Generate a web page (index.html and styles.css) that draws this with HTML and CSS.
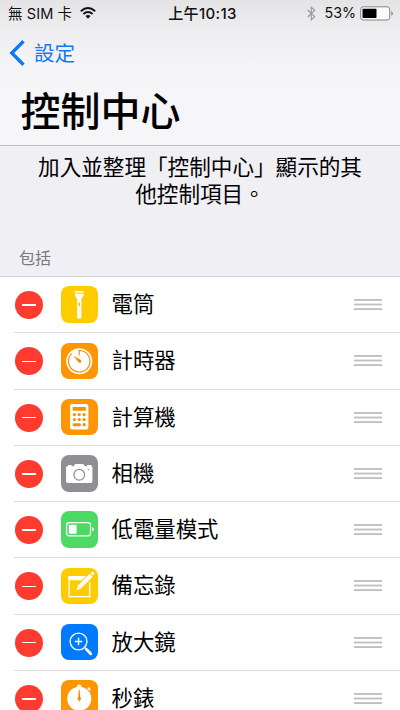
FILE: index.html
```html
<!DOCTYPE html>
<html lang="zh-Hant">
<head>
<meta charset="utf-8">
<title>控制中心</title>
<link rel="stylesheet" href="styles.css">
</head>
<body>
<header class="header">
  <div class="status">
    <div class="carrier"><span>無 SIM 卡</span>
      <svg class="wifi" viewBox="0 0 16 12"><g fill="none" stroke="#111" stroke-width="1.8"><path d="M.8 4.2Q8-2.1 15.2 4.2"/><path d="M3.4 7Q8 3.1 12.6 7"/></g><path d="M5.5 9Q8 6.9 10.5 9L8 11.7Z" fill="#111"/></svg>
    </div>
    <div class="time">上午10:13</div>
    <div class="power">
      <svg class="bluetooth" viewBox="0 0 9 15"><path d="M.7 4l7 6.7-3.4 3.1V1.2l3.4 3.1-7 6.7" fill="none" stroke="#969698" stroke-width="1.1"/></svg>
      <span>53%</span>
      <svg class="battery" viewBox="0 0 34 15"><rect x=".7" y=".8" width="29" height="13.2" rx="2.5" fill="#fafafa" stroke="#858587"/><rect x="2.5" y="2.7" width="14" height="9.4" rx=".8" fill="#000"/><path d="M31.4 5.1Q34.4 7.4 31.4 9.7Z" fill="#858587"/></svg>
    </div>
  </div>
  <nav class="back"><svg class="chevron" viewBox="0 0 17 26"><path d="M14.5 1.2L2.8 13l11.7 11.8" fill="none" stroke="#1278f3" stroke-width="3.4"/></svg><span>設定</span></nav>
  <h1 class="title">控制中心</h1>
</header>
<main>
  <p class="intro">加入並整理「控制中心」顯示的其<br>他控制項目。</p>
  <h2 class="section">包括</h2>
  <ul class="list">
    <li class="row"><i class="remove"></i>
      <svg class="icon yellow" viewBox="0 0 36 36"><path d="M13.5 5h9v1.500h-9zM13.500 7.300h9q0 3-2.400 5.400v18.300q0 1-1 1h-2.200q-1 0-1-1V12.700q-2.400-2.400-2.400-5.400z" fill="#fff"/><rect x="17.300" y="16.300" width="1.400" height="3.700" rx=".7" fill="#f5b800"/></svg>
      <span class="name">電筒</span><i class="grip"></i></li>
    <li class="row"><i class="remove"></i>
      <svg class="icon orange" viewBox="0 0 36 36"><circle cx="18" cy="18" r="12.900" fill="#fff"/><path d="M18 12V7.400A10.600 10.600 0 1 1 10.500 10.500" fill="none" stroke="#f28b00" stroke-width="1.100"/><path d="M12.300 12.500l7.200 4.200q1.200 1.200.2 2.300t-2.500.1Z" fill="#f28b00"/></svg>
      <span class="name">計時器</span><i class="grip"></i></li>
    <li class="row"><i class="remove"></i>
      <svg class="icon orange" viewBox="0 0 36 36"><rect x="9" y="5" width="18" height="25" rx="2" fill="#fff"/><g fill="#f49200"><rect x="11.500" y="8" width="13" height="3.600" rx=".6"/><circle cx="13.200" cy="15.300" r="1.600"/><circle cx="18" cy="15.300" r="1.600"/><circle cx="22.800" cy="15.300" r="1.600"/><circle cx="13.200" cy="20.300" r="1.600"/><circle cx="18" cy="20.300" r="1.600"/><circle cx="22.800" cy="20.300" r="1.600"/><rect x="11.500" y="23.800" width="8.200" height="3" rx="1.500"/><circle cx="22.800" cy="25.300" r="1.600"/></g></svg>
      <span class="name">計算機</span><i class="grip"></i></li>
    <li class="row"><i class="remove"></i>
      <svg class="icon gray" viewBox="0 0 36 36"><path d="M5 12q0-1 1-1h1V9.800h3.500V11h1.700l2-2.200h7.600l2 2.200h1.700V9.800H30V11q1 0 1 1v14q0 1.500-1.500 1.500h-23Q5 27.500 5 26Z" fill="#fff"/><circle cx="18" cy="19.500" r="5.300" fill="#fff" stroke="#8e8e93" stroke-width="1.200"/><circle cx="27" cy="14.500" r=".7" fill="#8e8e93"/></svg>
      <span class="name">相機</span><i class="grip"></i></li>
    <li class="row"><i class="remove"></i>
      <svg class="icon green" viewBox="0 0 36 36"><rect x="5.500" y="11.500" width="23.600" height="13" rx="2.500" fill="none" stroke="#fff" stroke-width="1.200"/><rect x="7.700" y="13.600" width="7.700" height="8.800" rx=".7" fill="#fff"/><path d="M30.700 15.700Q34.300 18 30.700 20.300Z" fill="#fff"/></svg>
      <span class="name">低電量模式</span><i class="grip"></i></li>
    <li class="row"><i class="remove"></i>
      <svg class="icon yellow" viewBox="0 0 36 36"><path d="M24 8.500H8v19.800h20.300V14" fill="none" stroke="#fff" stroke-width="1.300"/><path d="M7.500 8h17l-4 4.200h-13z" fill="#fff"/><path d="M15 22.300l1.800-5.200L28.200 5.700l3 3L19.800 20Z" fill="#fff"/><path d="M29 5l1-1q1-.8 2.200.3 1.100 1.200.3 2.200l-1 1Z" fill="#fff"/></svg>
      <span class="name">備忘錄</span><i class="grip"></i></li>
    <li class="row"><i class="remove"></i>
      <svg class="icon blue" viewBox="0 0 36 36"><circle cx="17.300" cy="17.300" r="8.300" fill="none" stroke="#fff" stroke-width="1.300"/><path d="M17.300 13.600V21M13.600 17.300H21" stroke="#fff" stroke-width="1.400"/><path d="M23 23l1.800 1.800" stroke="#fff" stroke-width="1.300"/><path d="M25 25l4.300 4.300" stroke="#fff" stroke-width="2.800" stroke-linecap="round"/></svg>
      <span class="name">放大鏡</span><i class="grip"></i></li>
    <li class="row"><i class="remove"></i>
      <svg class="icon orange" viewBox="0 0 36 36"><circle cx="18" cy="18.500" r="11.900" fill="#fff"/><path d="M16 5q2-1.300 4 0v3h-4z" fill="#fff"/><path d="M26.500 7.500l2.500 2.500" stroke="#fff" stroke-width="2"/><path d="M17.600 9.500h.8L19 17q1.200 1 .5 2.300-.7.900-1.200.9v1.500h-.6v-1.500q-.5 0-1.200-.9-.7-1.300.5-2.300Z" fill="#f28b00"/></svg>
      <span class="name">秒錶</span><i class="grip"></i></li>
  </ul>
</main>
</body>
</html>
```
FILE: styles.css
```css
* { box-sizing: border-box; }
html, body { height: 710px; overflow: hidden; }
body {
  margin: 0;
  background: #efeff4;
  color: #000;
  font-family: Inter, "Noto Sans CJK TC", sans-serif;
}
svg { display: block; flex: none; }
.header {
  height: 146px;
  background: linear-gradient(#e4e4e6 0, #ececee 25px, #f5f5f7 65px, #f6f6f8 100%);
  border-bottom: 1px solid #c0c0c5;
}
.status {
  display: grid;
  grid-template-columns: 1fr auto 1fr;
  align-items: center;
  height: 26px;
  padding: 0 6px 0 8px;
  font-size: 14.5px;
  line-height: 20px;
  color: #111;
}
.carrier, .power { display: flex; align-items: center; }
.carrier { gap: 8px; }
.carrier span { padding-top: 1px; letter-spacing: .1px; }
.power { justify-content: flex-end; }
.power span { font-size: 14.3px; }
.wifi { width: 16px; height: 12px; }
.time { margin-left: 3px; padding-top: 1px; font-size: 15px; font-weight: 500; letter-spacing: .35px; }
.bluetooth { width: 9px; height: 15px; margin-right: 8px; }
.battery { width: 34px; height: 15px; margin-left: 4px; }
.back {
  display: flex;
  align-items: center;
  gap: 8px;
  height: 53px;
  padding-left: 9px;
  font-size: 20.5px;
  line-height: 30px;
  color: #1278f3;
}
.back span { padding-top: 2px; }
.chevron { width: 17px; height: 26px; }
.title {
  margin: 0;
  padding: 2px 0 0 20.5px;
  font-size: 40px;
  font-weight: 500;
  line-height: 62px;
}
.intro {
  height: 93px;
  margin: 0;
  padding-top: 8px;
  font-size: 21.6px;
  line-height: 27px;
  text-align: center;
}
.section {
  height: 37px;
  margin: 0;
  padding: 7px 0 0 19px;
  font-size: 16px;
  font-weight: 400;
  line-height: 24px;
  color: #77777c;
}
.list {
  margin: 0;
  padding: 0;
  list-style: none;
  background: #fff;
  border-top: 1px solid #d2d2d7;
}
.row {
  display: flex;
  align-items: center;
  height: 56.25px;
  padding: 0 18px 1px 15px;
  background: linear-gradient(#dcdce0, #dcdce0) 14px 100% / 100% 1px no-repeat;
}
.remove {
  display: grid;
  place-items: center;
  width: 28px;
  height: 28px;
  margin-top: 1px;
  border-radius: 50%;
  background: #ff3b30;
}
.remove::before { content: ""; width: 14px; height: 1.5px; background: #fff; }
.icon { width: 36.5px; height: 36.5px; margin-left: 18px; border-radius: 8px; }
.yellow { background: #ffcc00; }
.orange { background: #ff9500; }
.gray { background: #8e8e93; }
.green { background: #4cd964; }
.blue { background: #007aff; }
.name { margin: -1px 0 0 14px; font-size: 21.4px; line-height: 30px; }
.grip {
  width: 28px;
  height: 11px;
  margin-left: auto;
  background: linear-gradient(#bfbfc3 1.4px, transparent 1.4px) 0 0 / 100% 4.6px;
}
```
